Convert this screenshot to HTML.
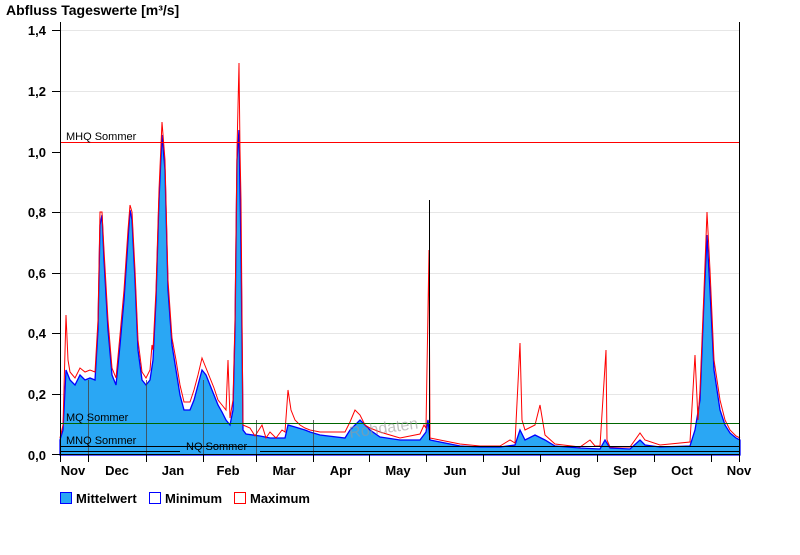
<!DOCTYPE html>
<html><head><meta charset="utf-8"><style>
html,body{margin:0;padding:0;background:#fff;}
body{width:800px;height:550px;overflow:hidden;font-family:"Liberation Sans",Arial,sans-serif;}
svg text{font-family:"Liberation Sans",Arial,sans-serif;}
</style></head><body>
<svg width="800" height="550" xmlns="http://www.w3.org/2000/svg">
<text x="6" y="15" font-size="14" font-weight="bold" fill="#000">Abfluss Tageswerte [m³/s]</text>
<g stroke="#e6e6e6" stroke-width="1">
<line x1="60" y1="30.5" x2="740" y2="30.5"/><line x1="60" y1="91.5" x2="740" y2="91.5"/>
<line x1="60" y1="212.5" x2="740" y2="212.5"/><line x1="60" y1="273.5" x2="740" y2="273.5"/>
<line x1="60" y1="333.5" x2="740" y2="333.5"/><line x1="60" y1="394.5" x2="740" y2="394.5"/>
</g>
<g font-size="13" font-weight="bold" text-anchor="end" fill="#000">
<text x="46" y="35">1,4</text><text x="46" y="96">1,2</text><text x="46" y="157">1,0</text>
<text x="46" y="217">0,8</text><text x="46" y="278">0,6</text><text x="46" y="338">0,4</text>
<text x="46" y="399">0,2</text><text x="46" y="460">0,0</text>
</g>
<g stroke="#000"><line x1="52" y1="30.5" x2="60" y2="30.5"/><line x1="52" y1="91.5" x2="60" y2="91.5"/><line x1="52" y1="152.5" x2="60" y2="152.5"/><line x1="52" y1="212.5" x2="60" y2="212.5"/><line x1="52" y1="273.5" x2="60" y2="273.5"/><line x1="52" y1="333.5" x2="60" y2="333.5"/><line x1="52" y1="394.5" x2="60" y2="394.5"/><line x1="52" y1="454.5" x2="60" y2="454.5"/></g>
<path fill="#2aa7f4" stroke="#0000ff" stroke-width="1.3" d="M60,455 L60,440 63,430 66,370 70,380 75,385 80,375 85,380 90,378 95,380 98,330 100,225 102,215 104,260 108,330 112,375 116,385 120,345 124,300 128,240 130,210 132,220 135,280 138,350 142,380 146,385 150,380 153,360 156,300 159,200 162,135 165,170 168,290 172,345 176,370 180,395 184,410 190,410 194,400 198,385 202,370 206,375 210,385 214,395 218,405 222,412 226,420 230,425 233,410 235,330 237,160 239,130 241,250 243,430 246,434 260,436 270,438 285,438 288,425 295,427 305,430 310,432 320,435 345,438 350,430 360,420 370,430 380,437 400,440 420,440 426,432 428,420 430,440 440,442 460,446 480,447 500,447 515,445 520,430 525,440 535,435 545,440 555,446 580,448 600,449 605,440 610,448 630,449 640,440 645,445 660,447 690,446 695,430 700,400 704,300 707,235 710,290 714,370 720,410 725,425 730,433 736,438 740,440 L740,455 Z"/>
<path fill="none" stroke="#ff0000" stroke-width="1" d="M60,438 63,425 66,315 68,360 70,372 75,378 80,368 85,372 90,370 95,372 98,320 100,212 102,212 104,250 108,320 112,368 116,378 120,335 124,290 128,230 130,205 132,212 135,270 138,340 142,372 146,378 150,370 152,345 153,350 156,290 159,190 162,122 165,160 168,280 172,338 176,360 180,385 184,402 190,402 194,390 198,375 202,358 206,368 210,378 214,388 218,400 222,405 226,410 228,360 230,418 233,400 235,320 237,150 239,63 240,150 241,200 243,425 250,428 255,436 262,425 266,438 270,432 276,438 282,430 285,432 288,390 291,410 295,420 300,425 305,428 310,430 320,432 345,432 350,422 355,410 360,415 365,425 370,428 380,432 400,438 420,434 424,425 426,428 429,250 430,438 440,440 460,444 480,446 500,446 510,440 515,443 520,343 522,420 525,430 535,425 540,405 545,435 555,444 580,447 590,440 595,446 600,446 606,350 607,440 610,447 630,447 640,433 645,440 660,445 690,442 695,355 698,420 700,390 704,290 707,212 710,270 714,360 720,400 725,420 730,430 736,436 740,438"/>
<line x1="429.5" y1="200" x2="429.5" y2="440" stroke="#000" stroke-width="1"/>
<g stroke="#444" stroke-width="1" opacity="0.8"><line x1="88.5" y1="380" x2="88.5" y2="455"/><line x1="146.5" y1="380" x2="146.5" y2="455"/><line x1="203.5" y1="380" x2="203.5" y2="455"/><line x1="256.5" y1="420" x2="256.5" y2="455"/><line x1="313.5" y1="420" x2="313.5" y2="455"/></g>
<line x1="60" y1="142.5" x2="740" y2="142.5" stroke="#ff0000" stroke-width="1"/>
<text x="66" y="140" font-size="11" fill="#000">MHQ Sommer</text>
<line x1="60" y1="423.5" x2="740" y2="423.5" stroke="#006600" stroke-width="1"/>
<text x="66" y="421" font-size="11" fill="#000">MQ Sommer</text>
<line x1="60" y1="446.5" x2="740" y2="446.5" stroke="#000" stroke-width="1"/>
<text x="66" y="444" font-size="11" fill="#000">MNQ Sommer</text>
<line x1="60" y1="451.5" x2="180" y2="451.5" stroke="#000"/><line x1="260" y1="451.5" x2="740" y2="451.5" stroke="#000"/>
<text x="186" y="450" font-size="11" fill="#000">NQ Sommer</text>
<text x="350" y="438" font-size="16" fill="#999" opacity="0.6" transform="rotate(-8 350 438)">Rohdaten</text>
<line x1="60.5" y1="22" x2="60.5" y2="462" stroke="#000"/>
<line x1="739.5" y1="22" x2="739.5" y2="462" stroke="#000"/>
<line x1="52" y1="454.5" x2="740" y2="454.5" stroke="#000"/>
<g stroke="#000"><line x1="60.5" y1="455" x2="60.5" y2="462"/><line x1="88.5" y1="455" x2="88.5" y2="462"/><line x1="146.5" y1="455" x2="146.5" y2="462"/><line x1="203.5" y1="455" x2="203.5" y2="462"/><line x1="256.5" y1="455" x2="256.5" y2="462"/><line x1="313.5" y1="455" x2="313.5" y2="462"/><line x1="369.5" y1="455" x2="369.5" y2="462"/><line x1="426.5" y1="455" x2="426.5" y2="462"/><line x1="483.5" y1="455" x2="483.5" y2="462"/><line x1="540.5" y1="455" x2="540.5" y2="462"/><line x1="597.5" y1="455" x2="597.5" y2="462"/><line x1="654.5" y1="455" x2="654.5" y2="462"/><line x1="711.5" y1="455" x2="711.5" y2="462"/></g>
<g font-size="13" font-weight="bold" fill="#000" text-anchor="middle">
<text x="73" y="475">Nov</text><text x="117" y="475">Dec</text><text x="173" y="475">Jan</text><text x="228" y="475">Feb</text><text x="284" y="475">Mar</text><text x="341" y="475">Apr</text><text x="398" y="475">May</text><text x="455" y="475">Jun</text><text x="511" y="475">Jul</text><text x="568" y="475">Aug</text><text x="625" y="475">Sep</text><text x="682" y="475">Oct</text><text x="739" y="475">Nov</text>
</g>
<rect x="60.5" y="492.5" width="11" height="11" fill="#2aa7f4" stroke="#0000ff"/>
<text x="76" y="503" font-size="13" font-weight="bold">Mittelwert</text>
<rect x="149.5" y="492.5" width="11" height="11" fill="#fff" stroke="#0000ff"/>
<text x="165" y="503" font-size="13" font-weight="bold">Minimum</text>
<rect x="234.5" y="492.5" width="11" height="11" fill="#fff" stroke="#ff0000"/>
<text x="250" y="503" font-size="13" font-weight="bold">Maximum</text>
</svg>
</body></html>
